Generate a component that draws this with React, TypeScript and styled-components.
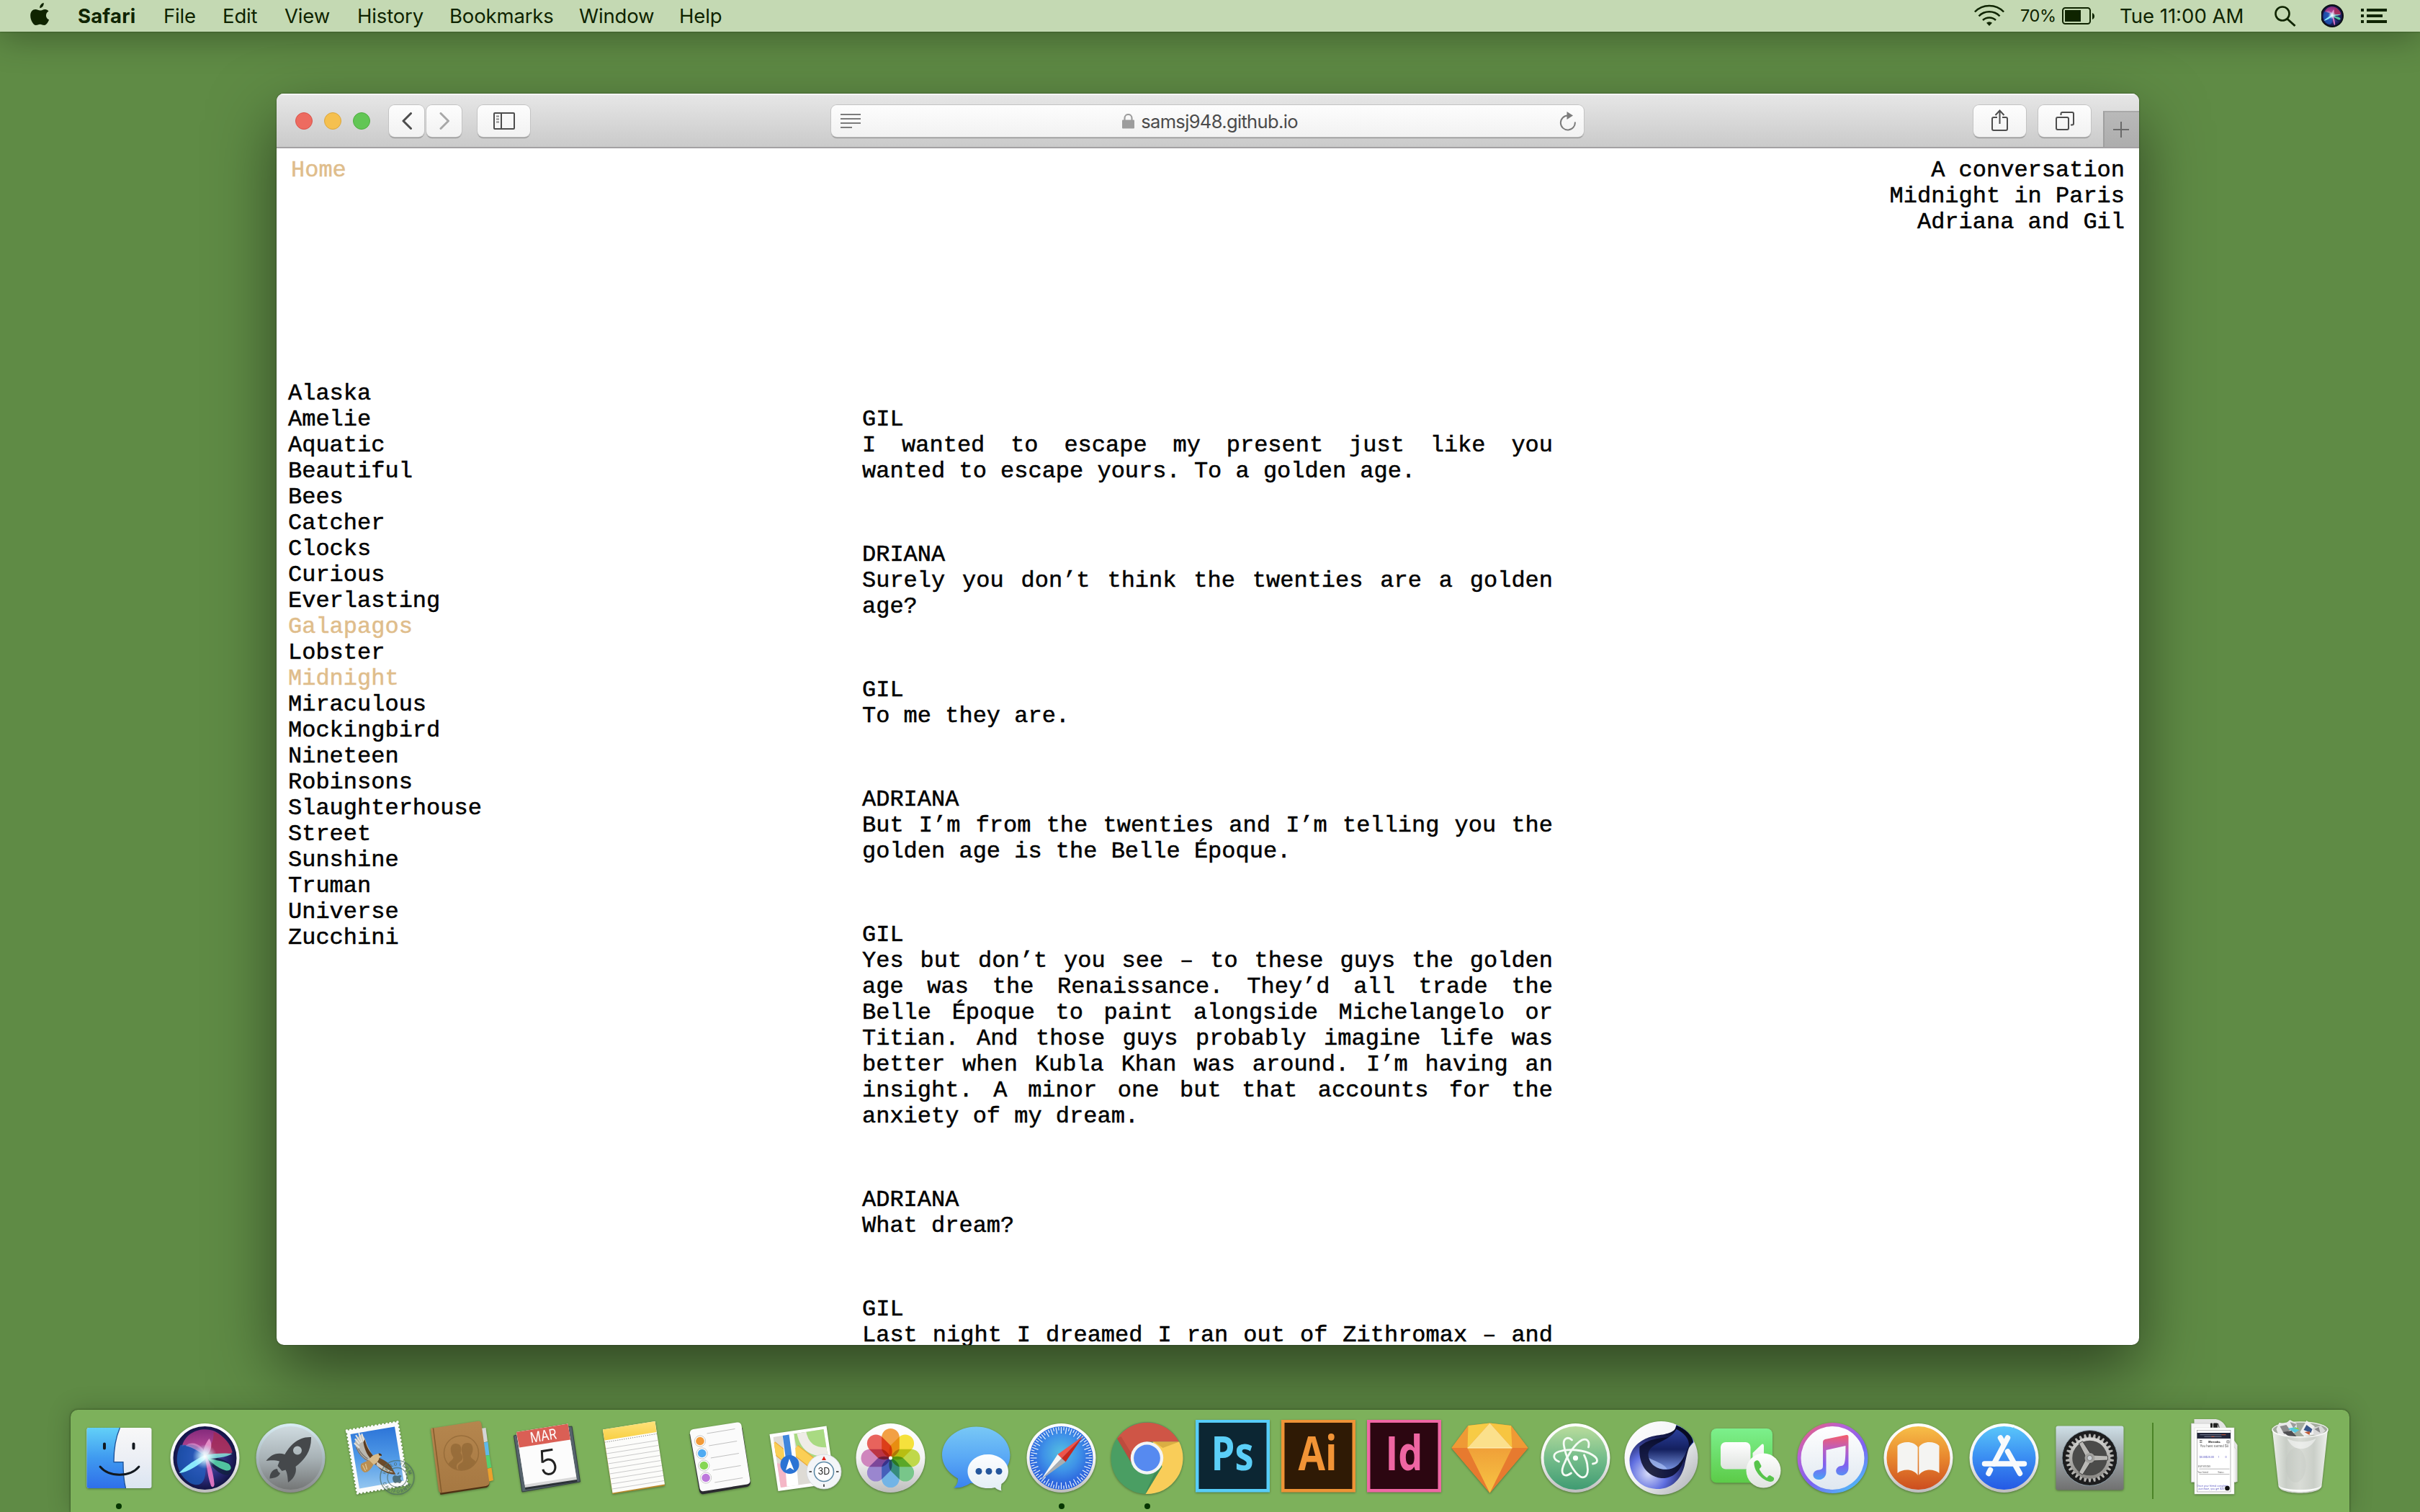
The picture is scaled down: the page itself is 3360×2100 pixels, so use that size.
import React from "react";
import styled, { createGlobalStyle } from "styled-components";

const GlobalStyle = createGlobalStyle`
  html, body { margin: 0; padding: 0; }
  *, *::before, *::after { box-sizing: border-box; }
`;

const ui = `Inter, Roboto, "Liberation Sans", sans-serif`;
const mono = `"Liberation Mono", "DejaVu Sans Mono", monospace`;

const Desktop = styled.div`
  width: 3360px;
  height: 2100px;
  display: flex;
  flex-direction: column;
  overflow: hidden;
  background: #5f8b45;
  font-family: ${ui};
`;

/* ---------- menu bar ---------- */

const MenuBar = styled.header`
  height: 44px;
  flex: none;
  display: flex;
  align-items: center;
  justify-content: space-between;
  padding: 0 46px 0 42px;
  background: #c4d9b3;
  color: #0f2400;
  box-shadow: 0 0 2px rgba(20, 45, 5, 0.7), 0 4px 50px rgba(0, 0, 0, 0.38);
  z-index: 1;
`;

const Menus = styled.nav`
  display: flex;
  align-items: center;
`;

const MenuItem = styled.span<{ $w: number; $bold?: boolean }>`
  width: ${(p) => p.$w}px;
  font-size: 27.5px;
  line-height: 44px;
  letter-spacing: ${(p) => (p.$bold ? 0.2 : -0.15)}px;
  white-space: nowrap;
  font-weight: ${(p) => (p.$bold ? 700 : 400)};
`;

const AppleSlot = styled.span`
  width: 66px;
  height: 44px;
  svg { display: block; }
`;

const Status = styled.div`
  display: flex;
  align-items: center;
  svg { display: block; flex: none; }
`;

const StatusText = styled.span<{ $size: number; $w: number; $track?: number }>`
  width: ${(p) => p.$w}px;
  font-size: ${(p) => p.$size}px;
  line-height: 44px;
  letter-spacing: ${(p) => p.$track ?? 0}px;
  white-space: nowrap;
`;

/* ---------- browser window ---------- */

const BrowserWindow = styled.main`
  width: 2586px;
  height: 1738px;
  flex: none;
  margin: 86px 0 0 384px;
  border-radius: 10px;
  display: flex;
  flex-direction: column;
  overflow: hidden;
  background: #fff;
`;

const WindowShadow = styled.div`
  display: flex;
  ${BrowserWindow} {
    box-shadow: 0 0 2px rgba(0, 0, 0, 0.55), 0 36px 90px rgba(0, 0, 0, 0.5);
  }
`;

const Toolbar = styled.div`
  height: 76px;
  flex: none;
  display: flex;
  align-items: flex-start;
  background: linear-gradient(#e7e7e7, #cacaca);
  border-bottom: 2px solid #a3a1a3;
  box-shadow: inset 0 2px 0 #f5f5f5;
`;

const Lights = styled.div`
  display: flex;
  gap: 16px;
  padding: 26px 0 0 26px;
`;

const Light = styled.i<{ $fill: string; $edge: string }>`
  width: 24px;
  height: 24px;
  border-radius: 50%;
  background: ${(p) => p.$fill};
  border: 1.5px solid ${(p) => p.$edge};
`;

const ToolButton = styled.div<{ $w: number; $ml: number }>`
  width: ${(p) => p.$w}px;
  height: 44px;
  margin: 16px 0 0 ${(p) => p.$ml}px;
  display: flex;
  align-items: center;
  justify-content: center;
  border-radius: 8px;
  background: linear-gradient(#fdfdfd, #f2f2f2);
  box-shadow: 0 0 0 1px #c3c3c3, 0 1.5px 1px #8f8f8f;
  svg { display: block; }
`;

const AddressBar = styled.div`
  width: 1045px;
  height: 44px;
  margin: 16px 0 0 418px;
  padding: 0 11px 0 13px;
  display: flex;
  align-items: center;
  justify-content: space-between;
  border-radius: 8px;
  background: linear-gradient(#fdfdfd, #f2f2f2);
  box-shadow: 0 0 0 1px #c3c3c3, 0 1.5px 1px #8f8f8f;
  svg { display: block; }
`;

const Address = styled.span`
  display: flex;
  align-items: center;
  gap: 9px;
  font-size: 25.5px;
  letter-spacing: -0.65px;
  color: #4b4b4b;
`;

const NewTab = styled.div`
  width: 50px;
  height: 50px;
  margin: 24px 0 0 auto;
  display: flex;
  align-items: center;
  justify-content: center;
  background: linear-gradient(#b9b9b9, #adadad);
  border-left: 2px solid #9f9f9f;
  border-top: 2px solid #a9a9a9;
  svg { margin-left: -3px; }
`;

/* ---------- page ---------- */

const Page = styled.div`
  flex: 1;
  min-height: 0;
  overflow: hidden;
  padding: 13px 20px 0 16px;
  font-family: ${mono};
  font-size: 32px;
  line-height: 36px;
  color: #000;
  -webkit-text-stroke: 0.5px currentColor;
`;

const PageHead = styled.div`
  display: flex;
  justify-content: space-between;
  height: 310px;
  padding-left: 4px;
`;

const Accent = styled.span`
  color: #dfbd8b;
`;

const Title = styled.div`
  text-align: right;
`;

const Columns = styled.div`
  display: flex;
`;

const Index = styled.ul`
  width: 797px;
  margin: 0;
  padding: 0;
  list-style: none;
`;

const IndexItem = styled.li<{ $on?: boolean }>`
  color: ${(p) => (p.$on ? "#dfbd8b" : "#000")};
`;

const Script = styled.div`
  width: 959px;
  padding-top: 36px;
  display: flex;
  flex-direction: column;
  gap: 80px;
`;

const Line = styled.p<{ $fill?: boolean }>`
  margin: 0;
  text-align: justify;
  text-align-last: ${(p) => (p.$fill ? "justify" : "auto")};
`;

/* ---------- dock ---------- */

const DockBar = styled.footer`
  width: 3164px;
  height: 142px;
  flex: none;
  margin: auto auto 0;
  padding-left: 8px;
  display: flex;
  border-radius: 10px 10px 0 0;
  background: #7db15b;
  box-shadow: 0 0 3px rgba(20, 40, 10, 0.75), 0 0 34px rgba(0, 0, 0, 0.2);
  z-index: 1;
`;

const Slot = styled.div`
  width: 118.96px;
  height: 142px;
  flex: none;
  display: flex;
  flex-direction: column;
  svg { display: block; overflow: visible; filter: drop-shadow(0 1.5px 1.5px rgba(0, 0, 0, 0.35)); }
`;

const RunningDot = styled.i`
  width: 8px;
  height: 8px;
  margin: 0 auto;
  border-radius: 50%;
  background: #063600;
`;

const Divider = styled.i`
  width: 2.5px;
  height: 106px;
  margin: 18px 25px 0 27px;
  background: #4b8427;
`;

/* ---------- dock icons, each drawn round its own centre ---------- */

const Grad = ({ id, stops, x2 = 0, y2 = 1 }: { id: string; stops: string[]; x2?: number; y2?: number }) => (
  <linearGradient id={id} x1="0" y1="0" x2={x2} y2={y2}>
    {stops.map((c, i) => (
      <stop key={i} offset={i / (stops.length - 1)} stopColor={c} />
    ))}
  </linearGradient>
);

const Ring = () => (
  <>
    <Grad id="ring" stops={["#ffffff", "#f4f4f4", "#bdbdbd"]} />
    <circle r="48" fill="url(#ring)" />
  </>
);

const Finder = () => (
  <>
    <Grad id="fL" stops={["#62d0f8", "#3f9af0", "#2f6fe9"]} />
    <Grad id="fR" stops={["#f8f8f8", "#eceff5", "#dbe5f2"]} />
    <rect x="-45" y="-42" width="90" height="84" rx="3" fill="url(#fR)" />
    <path d="M-42-42H1C-5-28-7.500-10-7.500 5.700H5.500C5.500 20 6.500 32 9 42H-42a3 3 0 0 1-3-3V-39a3 3 0 0 1 3-3z" fill="url(#fL)" />
    <path d="M1-42C-5-28-7.500-10-7.500 5.700H5.500C5.500 20 6.500 32 9 42" fill="none" stroke="#1b4f94" strokeWidth="1.300" />
    <path d="M-20.500-19.500v6M20-19.500v6" stroke="#12181f" strokeWidth="4" strokeLinecap="round" />
    <path d="M-26.500 12C-14 27 15 27 27.500 12" fill="none" stroke="#12181f" strokeWidth="2.800" strokeLinecap="round" />
  </>
);

const SiriGlyph = ({ s = 1 }: { s?: number }) => (
  <g transform={`scale(${s})`}>
    <radialGradient id="siriBg" cx="0.5" cy="0.5" r="0.55">
      <stop offset="0" stopColor="#6a5bb8" />
      <stop offset="0.6" stopColor="#2a2a78" />
      <stop offset="1" stopColor="#0c0d35" />
    </radialGradient>
    <radialGradient id="siriGlow">
      <stop offset="0" stopColor="#fff" />
      <stop offset="0.35" stopColor="#dffcff" stopOpacity="0.8" />
      <stop offset="1" stopColor="#b9e8ff" stopOpacity="0" />
    </radialGradient>
    <Grad id="siriPink" stops={["#a02f86", "#c2418f", "#d763a8"]} />
    <circle r="44" fill="url(#siriBg)" />
    <path d="M-32-16C-26-38-2-44 14-37 26-31 36-18 38-8 32-3 18-3 0-4-8-18-18-22-32-16z" fill="url(#siriPink)" opacity="0.8" />
    <path d="M12-36C26-32 37-18 38-8 32-2 18-3 0-4 6-14 13-22 12-36z" fill="#a02b54" opacity="0.8" />
    <path d="M-34-18C-44 2-38 26-18 36-2 42 4 28 0-3-10-12-22-20-34-18z" fill="#1c63c4" opacity="0.7" />
    <path d="M0-3C8 14 26 28 34 22 44 10 30 0 0-3z" fill="#10213f" opacity="0.8" />
    <path d="M-27-17C-16-26 0-16 1-3-8-8-14-14-27-17z" fill="#e2a3dc" opacity="0.6" />
    <path d="M6-27C0-19-4-10-1-2 8-6 12-18 6-27z" fill="#f2a0d4" opacity="0.8" />
    <path d="M0-4C-14 2-30 14-36 21-24 20-8 10 2 0z" fill="#8ff1ff" opacity="0.95" />
    <path d="M0-4C14-7 30-7 38-6 30-1 14 1 0 1z" fill="#7fe6dd" opacity="0.85" />
    <path d="M1-2C12 4 24 3 33 8 40 15 34 19 28 17 18 14 8 6 1-2z" fill="#58d5a8" opacity="0.9" />
    <path d="M0-3C3 12 4 26 8 37 9 42 14 41 13 35 12 22 8 8 2-3z" fill="#e477c4" opacity="0.95" />
    <circle cx="0" cy="-2" r="17" fill="url(#siriGlow)" />
  </g>
);

const Siri = () => (
  <>
    <Ring />
    <SiriGlyph />
  </>
);

const Launchpad = () => (
  <>
    <Grad id="lpR" stops={["#d9eef5", "#a9b9bf", "#8a8a8a"]} />
    <Grad id="lpI" stops={["#cfdbe0", "#a8b2b6", "#747676"]} />
    <circle r="48" fill="url(#lpR)" />
    <circle r="44" fill="url(#lpI)" />
    <path
      fillRule="evenodd"
      fill="#45484b"
      d="M28.500-29C10-30-2-16-8-5-20-9-29-3-34 4-29 3-20 3-15.500 4.500L-18 11-12 18-7 16.500C-5 20-4 26-3.500 34 4 29 9 21 7 12 20 2 29-10 28.500-29zM9.500-16.500a6 6 0 1 1 0 12 6 6 0 0 1 0-12z"
    />
    <path d="M-18.500 15C-26 16-29 22-29 28.500-22 28-16 26-14.500 21-17 20-18 18-18.500 15z" fill="#45484b" />
  </>
);

const applePath =
  "M20.400 8.900c-2.600.1-4.800 1.700-6.700 1.700-2.100 0-4.100-1.600-6.400-1.600C3.400 9 .2 12.300.2 17.700c0 6.600 4.200 13.300 7.600 13.300 2 0 3.400-1.300 5.900-1.300 2.400 0 3.500 1.300 5.800 1.300 2.900 0 5.700-4.600 6.500-7.700-5.100-2-5.500-9.100-.5-11.900-1.200-1.700-3.100-2.600-5.100-2.500zM18.700 0c-3.100.4-5.800 3.600-5.400 7.200C16.500 7.100 19.200 3.600 18.700 0z";

const Mail = () => (
  <>
    <Grad id="mSky" stops={["#2c74d8", "#4f99e6", "#94c6f0"]} />
    <polygon points="-41,-38 29.500,-50 43,37 -26.500,49" fill="#fbfbfb" stroke="#fbfbfb" strokeWidth="3.400" strokeDasharray="0.100 5" strokeLinecap="round" />
    <polygon points="-36,-33 25.500,-43.500 38,31.500 -23.500,42.500" fill="url(#mSky)" />
    <path d="M-30-22C-27-8-20 1-11 5L-3-1C-8-8-13-17-15-25-17-30-20-33-23-32z" fill="#b9b6ae" />
    <path d="M-29-26l5 6M-28-31l6 9M-24-34l4 11M-20-33l3 10M-30-20l6 5" stroke="#e4e2dc" strokeWidth="2.200" strokeLinecap="round" />
    <path d="M-28-15C-24-5-18 1-11 4M-25-13C-21-6-17-2-12 1" stroke="#77706a" strokeWidth="1.300" fill="none" />
    <path d="M-16-26C-14-16-9-8-3-2L-7 2C-13-4-17-14-18-22z" fill="#5b3c22" />
    <path d="M0-2C10 2 19 7 22 14L27 23C18 23 8 19 2 12L-5 6z" fill="#6a4a2b" />
    <path d="M1 5C8 11 15 15 24 20 15 20 7 16 0 10z" fill="#cdc6ba" />
    <path d="M-10 2C-6-4 0-6 4-6 7-5 7-2 4 0 3 6-3 10-9 11z" fill="#d8bb8b" />
    <path d="M-10 3L-4 9C-7 15-11 20-16 20-21 18-23 12-21 8-18 6-14 5-10 3z" fill="#b98e52" />
    <path d="M-19 10l4 8M-15 8l2 8" stroke="#e0c594" strokeWidth="1.300" />
    <path d="M3-6.500C6-6.500 8-5 7.500-3L4-3.500z" fill="#4a3019" />
    <g fill="none" stroke="#4c6a63" opacity="0.65">
      <circle cx="29" cy="27" r="23.500" strokeWidth="1.600" />
      <circle cx="29" cy="27" r="13.500" strokeWidth="1.400" />
      <path id="markTop" d="M12.500 27a16.500 16.500 0 0 1 33 0" stroke="none" />
      <path id="markLow" d="M7.500 27a21.500 21.500 0 0 0 43 0" stroke="none" />
    </g>
    <g fill="#4c6a63" opacity="0.75" fontFamily="Inter, sans-serif" fontWeight="700" fontSize="6.200">
      <text>
        <textPath href="#markTop" startOffset="4" textLength="44">HELLO FROM</textPath>
      </text>
      <text>
        <textPath href="#markLow" startOffset="8" textLength="50">CALIFORNIA</textPath>
      </text>
    </g>
    <g transform="translate(22.500 19.500) scale(0.5)" fill="#3e5c62" opacity="0.8">
      <path d={applePath} />
    </g>
  </>
);

const Contacts = () => (
  <>
    <Grad id="ct" stops={["#b5864e", "#a67842"]} />
    <polygon points="26,-41 33,-42 35.500,-23 28,-21" fill="#d4d4d6" />
    <polygon points="28,-21 36,-22.500 38,-4 31,-3" fill="#5fb9ea" />
    <polygon points="31,-3 38,-4 41,13 34,15" fill="#56cf6d" />
    <polygon points="34,15 41,13.500 43.500,31 36,33" fill="#eba12c" />
    <path d="M-42-40L-30 51 34 41Q38 39 38 35z" fill="#4e3013" />
    <path d="M-43.500-41L21-51Q26-52 27-47L38 34Q38 38 33 39L-29.500 48.500Q-32 48-32.500 45z" fill="url(#ct)" />
    <path d="M-40-41.500L-28.500 48" stroke="#835b2c" strokeWidth="1.500" />
    <g opacity="0.65">
      <circle cx="-1" cy="-7" r="24" fill="none" stroke="#8d6433" strokeWidth="1.500" />
      <path d="M-19 9C-18 4-12 3-12-1-17-7-18-20-9-20-1-20 0-13-2-7 3-1 1 3-4 6-9 9-8 14-6 16-12 15-16 13-19 9z" fill="#8d6433" />
      <path d="M-4 17C-8 12-5 9 0 6 3 3 1-2 0-7-2-16 1-21 8-21 16-21 17-10 12-3 12 1 17 2 19 5 14 14 5 18-4 17z" fill="#8d6433" />
    </g>
  </>
);

const Calendar = () => (
  <>
    <polygon points="-47,-31 33.500,-44 45,33 -35.500,47" fill="#56636c" stroke="#343d44" strokeWidth="1" />
    <polygon points="-43,-30 29,-43 41,33 -31,44" fill="#2d3338" />
    <polygon points="-43.500,-36 28,-47.500 40.500,30 -31.500,41" fill="#d9d9d9" />
    <polygon points="-43.500,-36 28,-47.500 39.500,26 -32,37" fill="#fcfcfc" />
    <polygon points="-43.500,-36 28,-47.500 31.500,-25.500 -39.500,-14.500" fill="#da5f55" />
    <g fontFamily="Inter, sans-serif" textAnchor="middle">
      <text transform="translate(-5 -24) rotate(-9)" fontSize="20" fill="#fff" textLength="37" lengthAdjust="spacingAndGlyphs">MAR</text>
      <text transform="translate(3 23.500) rotate(-9)" fontSize="49" fontWeight="300" fill="#222" textLength="27" lengthAdjust="spacingAndGlyphs">5</text>
    </g>
  </>
);

const Notes = () => (
  <>
    <Grad id="nt" stops={["#ffe27a", "#f8cf42"]} />
    <polygon points="-42.500,-38 30,-50 43.500,38.500 -29,50" fill="#b98b2c" />
    <polygon points="-42.500,-39.500 30,-51 43.500,36.500 -29,48.500" fill="#fcfcfa" />
    <polygon points="-42.500,-39.500 30,-51 32,-36 -40,-24.500" fill="url(#nt)" />
    <path d="M-40-21.800L32-33.500" stroke="#777" strokeWidth="1" strokeDasharray="1.200 1.800" />
    {[0, 1, 2, 3, 4, 5, 6, 7, 8].map((i) => (
      <path key={i} d={`M${-38.5 + i * 1.15} ${-13 + i * 7}l72-11.500`} stroke="#c4c4c4" strokeWidth="0.900" />
    ))}
  </>
);

const Reminders = () => (
  <>
    <path d="M-41-33L-27.500 46Q-26 51-21 50L39 40Q44 38 43.500 33L32-42z" fill="#2b2b30" />
    <path d="M-36-40L25-49.500Q30-50 31-45L43 31Q43.500 35.500 39 36.500L-21 46Q-26 47-27 42L-40.500-34Q-41-39-36-40z" fill="#fbfbfb" />
    {["#f29a38", "#4fabf2", "#86d653", "#bd78dc"].map((c, i) => (
      <g key={c}>
        <circle cx={-26.500 + i * 2.700} cy={-23.500 + i * 17} r="7.600" fill="#fff" stroke="#c6c6c6" strokeWidth="1" />
        <circle cx={-26.500 + i * 2.700} cy={-23.500 + i * 17} r="5.800" fill={c} />
      </g>
    ))}
    {[0, 1, 2, 3, 4].map((i) => (
      <path key={i} d={`M${-17 + i * 2.700} ${-34 + i * 17}l39-6.500`} stroke="#c0c0c0" strokeWidth="1" />
    ))}
  </>
);

const Maps = () => (
  <>
    <clipPath id="mapClip">
      <polygon points="-44,-29 26,-40 37,31 -33.500,41" />
    </clipPath>
    <polygon points="-49,-33 30,-44.500 41.500,35 -37,46" fill="#fff" />
    <g clipPath="url(#mapClip)">
      <rect x="-50" y="-50" width="100" height="100" fill="#dedbd5" />
      <polygon points="-18,-44 40,-50 50,20 -10,-8" fill="#a9da82" />
      <path d="M-6-46C-4-14 12-4 44-10" stroke="#efece6" strokeWidth="13" fill="none" />
      <polygon points="-50,5 -24,10 -22,50 -50,50" fill="#f4b6c6" />
      <path d="M-46-17L-26-1M-14-12L14 10" stroke="#eba93d" strokeWidth="15" />
      <path d="M-46-17L-26-1M-14-12L14 10" stroke="#fbcf55" strokeWidth="12.500" />
      <path d="M-24-44L-16 50" stroke="#fff" strokeWidth="16" />
      <path d="M-28-44L-21 8" stroke="#3f86dc" strokeWidth="9" />
    </g>
    <circle cx="-21" cy="9" r="13" fill="#2b73d4" />
    <path d="M-21.500 1L-15 17-20.500 13.500-26.500 17z" fill="#fff" />
    <circle cx="26.500" cy="19" r="24" fill="#f3f5f8" stroke="#d2d6da" strokeWidth="0.800" />
    <circle cx="26.500" cy="19" r="13.500" fill="#fff" stroke="#5d89a6" strokeWidth="1.600" />
    <polygon points="26.500,-2.500 23.500,3 29.500,3" fill="#e2231a" />
    <path d="M6 19h3.500M43.500 19H47M26.500 36.500v3.500" stroke="#222" strokeWidth="1.500" />
    <text x="26.500" y="23.500" fontFamily="Inter, sans-serif" fontSize="12.500" fill="#222" textAnchor="middle">3D</text>
  </>
);

const Photos = () => (
  <>
    <Ring />
    <g style={{ isolation: "isolate" }}>
      {["#f2a045", "#f5e13c", "#c0d84a", "#78c68a", "#72b4e6", "#9a86cf", "#cf86bd", "#e8635c"].map((c, i) => (
        <path
          key={c}
          transform={`rotate(${i * 45})`}
          style={{ mixBlendMode: "multiply" }}
          d="M-12.300-28.700a12.300 12.300 0 0 1 24.600 0V-13C12.300-8 5-1 0 0-5-1-12.300-8-12.300-13z"
          fill={c}
        />
      ))}
    </g>
    <circle r="2.500" fill="#fff" />
  </>
);

const Messages = () => (
  <>
    <Grad id="ms" stops={["#78c8f6", "#5aa9f5", "#3a83ef"]} />
    <Grad id="ms2" stops={["#fdfeff", "#e2edf5"]} />
    <path d="M0-43.500C26-43.500 47-26 47-4S26 35.500 0 35.500Q-4 35.500-8 34.800C-14 39-22 42-31 41.500-27 38-25 34-25.500 28.500-39 21-47.500 9-47.500-4-47.500-26-26-43.500 0-43.500z" fill="url(#ms)" />
    <path d="M16-5C32-5 44.500 5.500 44.500 18.500 44.500 26 41 32 35 36 34.500 40 34 42.500 35 45.500 31 45 28 43 26 41 23 42 19 42 16 42 0 42-12 31.500-12 18.500S0-5 16-5z" fill="url(#ms2)" />
    <circle cx="3.500" cy="18.500" r="4.500" fill="#24569c" />
    <circle cx="17.500" cy="18.500" r="4.500" fill="#24569c" />
    <circle cx="31.500" cy="18.500" r="4.500" fill="#24569c" />
  </>
);

const SafariIcon = () => (
  <>
    <radialGradient id="sf" cy="0.42">
      <stop offset="0" stopColor="#55bfe0" />
      <stop offset="0.55" stopColor="#3f93e8" />
      <stop offset="1" stopColor="#2b63dd" />
    </radialGradient>
    <Ring />
    <circle r="44" fill="url(#sf)" />
    {Array.from({ length: 72 }, (_, i) => (
      <path key={i} d={`M0-43V${i % 2 ? -38.500 : -34}`} transform={`rotate(${i * 5})`} stroke="#e8f2fb" strokeWidth="1.200" />
    ))}
    <polygon points="30,-30 -5,-5 0.500,0.500" fill="#f0544a" />
    <polygon points="30,-30 6,5.500 0.500,0.500" fill="#c8271d" />
    <polygon points="-28,30 -5,-5 0.500,0.500" fill="#f6f6f6" />
    <polygon points="-28,30 6,5.500 0.500,0.500" fill="#a9adb1" />
  </>
);

const Chrome = () => (
  <>
    <circle r="50" fill="#4a9e63" />
    <path d="M-41.500-27A50 50 0 0 1 44.500-22.500H0L-22 5.500z" fill="#cf5546" />
    <path d="M44.700-22.500A50 50 0 0 1-2 50L21 12 8-22.500z" fill="#f9cd59" />
    <path d="M-2 50L21 12 10 22-1 46z" fill="#35794a" opacity="0.5" />
    <path d="M44.700-22.500L10-22.500 22-14z" fill="#c59a35" opacity="0.6" />
    <path d="M-41.500-27L-22 7-19-2-36-30z" fill="#9a3a30" opacity="0.35" />
    <circle r="22.700" fill="#f4f4f4" />
    <circle r="18.400" fill="#568af0" />
  </>
);

const Adobe = ({ text, edge, ink, fill, w, x }: { text: string; edge: string; ink: string; fill: string; w: number; x: number }) => (
  <>
    <rect x="-51.500" y="-53" width="103" height="100.500" fill={edge} />
    <rect x="-47" y="-49" width="94" height="92" fill={fill} />
    <text x={x} y="17" fontFamily="Open Sans, Noto Sans, sans-serif" fontWeight="700" fontSize="66" fill={ink} textLength={w} lengthAdjust="spacingAndGlyphs">
      {text}
    </text>
  </>
);

const SketchIcon = () => (
  <>
    <Grad id="skB" stops={["#f0a038", "#f7c544"]} />
    <polygon points="-30,-45 0,-48.500 29.500,-45 53,-14 0,48.500 -53,-14" fill="#ee8a2e" />
    <polygon points="-30,-45 -53,-14 -31,-14" fill="#ef9a35" />
    <polygon points="29.500,-45 53,-14 31,-14" fill="#ef9a35" />
    <polygon points="-30,-45 0,-48.500 -31,-14" fill="#f7cb45" />
    <polygon points="29.500,-45 0,-48.500 31,-14" fill="#f7c540" />
    <polygon points="0,-48.500 31,-14 -31,-14" fill="#fbe08c" />
    <polygon points="-53,-14 -31,-14 0,48.500" fill="#e77a2f" />
    <polygon points="53,-14 31,-14 0,48.500" fill="#e77a2f" />
    <polygon points="-31,-14 31,-14 0,48.500" fill="url(#skB)" />
    <path d="M-31-14H31" stroke="#fff3c4" strokeWidth="1.200" />
  </>
);

const Atom = () => (
  <>
    <Grad id="at" stops={["#b9dc9c", "#75bd8b", "#3f9b72"]} />
    <Ring />
    <circle r="44" fill="url(#at)" />
    <g fill="none" stroke="#f5fbf5" strokeWidth="2.800" strokeLinecap="round">
      <path d="M-23 5C-32 1-32-6-23-9-10-13 12-12 24-4 32 1 32 7 24 8" />
      <path d="M-5-25C-10-30-18-28-16-17-14-4-6 14 3 23 10 30 17 27 17 16 17 8 15 2 12-4" />
      <path d="M18-15C20-23 16-28 9-25-2-19-12-2-17 11-21 22-16 28-6 21" />
    </g>
    <circle r="3.600" fill="#fff" />
  </>
);

const Cinema = () => (
  <>
    <Grad id="c4" x2={1} stops={["#ffffff", "#f1f2f5", "#a8abb0"]} />
    <radialGradient id="c4b" cx="0.3" cy="0.75" r="0.85">
      <stop offset="0" stopColor="#d7dcf8" />
      <stop offset="0.35" stopColor="#5f6ee0" />
      <stop offset="0.7" stopColor="#151a50" />
      <stop offset="1" stopColor="#070a22" />
    </radialGradient>
    <Grad id="c4c" stops={["#2a3f9c", "#14205f", "#7793e0"]} />
    <circle r="51" fill="url(#c4)" />
    <path d="M21-46C34-41 44-30 45-22L38-14 18-36z" fill="#12309a" />
    <path d="M21-45C40-38 44-26 44-22 38-18 36-6 32 12 26 34 10 44-7 43-30 42-44 24-44 3-43-16-26-28-8-31 6-33 20-35 21-45z" fill="url(#c4b)" />
    <path d="M-30-16C-32 8-20 26 0 28 18 29 28 16 32 0L26-30C10-28-14-30-30-16z" fill="#070b27" opacity="0.85" />
    <path d="M21-40C34-34 40-24 38-16 32-2 26 15 7 16-7 16-18 6-18-5-17-22 12-22 21-40z" fill="url(#c4c)" />
    <path d="M-17 0C-14 12-2 17 8 15 4 8-8 5-17 0z" fill="#a9c0f5" opacity="0.7" />
  </>
);

const Facetime = () => (
  <>
    <Grad id="ft" stops={["#7cf08c", "#5ccb48"]} />
    <Grad id="ft2" stops={["#ffffff", "#dfe3df"]} />
    <rect x="-50" y="-41" width="85.500" height="75.500" rx="8" fill="url(#ft)" />
    <rect x="-36.500" y="-22" width="41.500" height="37.500" rx="7" fill="url(#ft2)" />
    <path d="M8-7L20-18.500Q23-21 23.500-17V10Q23 13 20 11L8 1z" fill="url(#ft2)" />
    <circle cx="23" cy="17.500" r="24" fill="url(#ft2)" />
    <path d="M10 6C12 3 15 2 17 5L20 11C20 14 16 14 18 17 21 22 24 25 27 27 29 28 29 24 32 24L37 27C39 30 36 33 33 33 22 32 9 18 10 6z" fill="#57c44b" />
  </>
);

const ITunes = () => (
  <>
    <Grad id="it" x2={0.7} stops={["#fb5f5a", "#b561d8", "#7b62f2", "#4fb7f8"]} />
    <Grad id="itI" stops={["#ffffff", "#dfe7f0"]} />
    <Grad id="itN" stops={["#f45d6a", "#b85ec4", "#8060f0", "#4aa2f5"]} />
    <circle r="49" fill="url(#it)" />
    <circle r="44" fill="url(#itI)" />
    <path d="M-13.500-22Q-13.500-25-10.500-26L19-32Q22-32.500 22-29V14C22 21 16 25 11 24 2 23 3 12 12 11 16 10 18 10 18-17L-9-11V20C-9 27-15 30.500-20 30-30 29-29 17-19 16.500-15 16-13.500 15-13.500 11z" fill="url(#itN)" />
  </>
);

const IBooks = () => (
  <>
    <Grad id="ib" stops={["#f7bf48", "#e8872e", "#cc4d1f"]} />
    <Ring />
    <circle r="44" fill="url(#ib)" />
    <path d="M-0.800-15C-6-24-22-24-29-17V21C-21 14-6 15-0.800 24zM0.800-15C6-24 22-24 29-17V21C21 14 6 15 0.800 24z" fill="#f4f4f2" />
  </>
);

const AppStore = () => (
  <>
    <Grad id="as" stops={["#59c6fa", "#3a8df2", "#2459e4"]} />
    <Ring />
    <circle r="44" fill="url(#as)" />
    <g stroke="#f8fafc" strokeWidth="7.500" strokeLinecap="round">
      <path d="M-27 8H28" />
      <path d="M5-28L-14 8" />
      <path d="M-19 16.500L-21.500 21.500" />
      <path d="M-5-28L0-19M5-9L22 21.500" />
    </g>
  </>
);

const Preferences = () => (
  <>
    <Grad id="sp" stops={["#cfe0e8", "#9aa1a5", "#707070"]} />
    <Grad id="spg" stops={["#d4d4d2", "#8d8b88"]} />
    <rect x="-47" y="-44.500" width="94" height="89" rx="3" fill="url(#sp)" />
    <circle r="38.500" fill="#1d1d1e" stroke="#8fa0aa" strokeWidth="1" />
    {Array.from({ length: 30 }, (_, i) => (
      <polygon key={i} transform={`rotate(${i * 12})`} points="-2.300,-27 -1.200,-33.500 1.200,-33.500 2.300,-27" fill="#b4b3b0" />
    ))}
    <circle r="26.500" fill="#4b4b4a" stroke="url(#spg)" strokeWidth="4.500" />
    {[90, 210, 330].map((a) => (
      <path key={a} d="M-4-3L-3-25H3L4-3z" transform={`rotate(${a})`} fill="#b9b8b5" stroke="#2b2b2b" strokeWidth="0.700" />
    ))}
    <circle r="7" fill="#a3a29f" />
    <circle r="3.600" fill="#c9cdd1" stroke="#6b6b6b" strokeWidth="0.800" />
  </>
);

const Downloads = () => (
  <>
    <path d="M-28-54H2Q14-52 18-38L32-18V33H-28z" fill="#e4e4e4" />
    <path d="M-32-48H-8L10-40 30-12V33.500H-32z" fill="#f7f7f7" stroke="#c4c4c4" strokeWidth="0.700" />
    <path d="M-5-48h2v7h-2zM-1-48h5v7h-5zM5-48l2 7" fill="#222" stroke="#222" />
    <rect x="-27.500" y="-42" width="55" height="92" fill="#fff" stroke="#d5d5d5" strokeWidth="0.500" />
    <rect x="-24" y="-38.500" width="46.500" height="85.500" fill="#fff" stroke="#8a8a8a" strokeWidth="0.600" />
    <rect x="-24" y="-35" width="46.500" height="8" fill="#22263a" />
    <path d="M-20-32.300h30M-14-29.700h24" stroke="#8e93a8" strokeWidth="0.800" />
    <path d="M10-32.300h6M-4-29.700h4" stroke="#e2603a" strokeWidth="0.900" />
    <path d="M-20.500-24.500h3.500M-20.500-23h3.500M-20.500-21.500h3.500" stroke="#333" strokeWidth="0.600" />
    <rect x="17.500" y="-24" width="3" height="3" fill="none" stroke="#333" strokeWidth="0.600" />
    <g fontFamily="Inter, sans-serif" fontSize="3.400" textAnchor="middle" fill="#555">
      <text x="0" y="-21.500" fontWeight="700" fill="#111">Mercedes</text>
      <text x="0" y="-15.500" fontSize="4.200">You have earned $0</text>
      <text x="-16" y="-0.500" fill="#5a57c0">$0.00</text>
      <text x="-6" y="-0.500" fill="#5a57c0">$20.00</text>
      <text x="6" y="-0.500" fill="#5a57c0">1</text>
      <text x="16" y="-0.500" fill="#5a57c0">0</text>
      <text x="-14" y="13.500" fontSize="2.800">INVITATIONS</text>
      <text x="-16" y="21" fontSize="2.800">Your friend</text>
      <text x="9" y="21" fontSize="2.800">Status</text>
      <text x="-2" y="40" fill="#5a57c0">Once your friend completes</text>
      <text x="-4" y="44" fill="#5a57c0">purchase, you get $20</text>
    </g>
    <path d="M-21 15.200h42M-21 22.500h42" stroke="#8a8a8a" strokeWidth="0.600" />
    <circle cx="18" cy="42" r="3.300" fill="#111" />
  </>
);

const Trash = () => (
  <>
    <Grad id="tr" x2={1} y2={0} stops={["#f2f4f1", "#cdd0cc", "#dfe0dd", "#cfd2ce", "#f4f5f3"]} />
    <ellipse cx="0" cy="-39" rx="38.500" ry="11" fill="#a4ab9f" stroke="#e9ece7" strokeWidth="1.500" />
    <polygon points="-33,-40 -29,-49 -20,-48 -14,-53 -5,-48 -4,-38 -16,-29 -30,-32" fill="#e9e9e9" />
    <polygon points="-28,-44 -19,-46 -14,-39 -22,-33" fill="#8b8b8c" />
    <polygon points="-14,-50 -5,-47 -9,-41" fill="#9c9c9c" />
    <polygon points="-17,-41 -6,-43 -1,-39 -7,-35" fill="#58c8de" />
    <polygon points="-10,-42 -3,-42 -1,-39" fill="#8fd04b" />
    <polygon points="-24,-36 -12,-38 -5,-30 -14,-29" fill="#4f4f52" />
    <polygon points="0,-36 9,-52 20,-44 22,-33 6,-30" fill="#efefef" />
    <polygon points="5,-39 9,-46 17,-40 15,-35" fill="#38568a" />
    <polygon points="6,-36 14,-37 13,-32" fill="#c05a34" />
    <polygon points="18,-42 29,-45 35,-38 28,-31 19,-32" fill="#d9d9d9" />
    <polygon points="20,-40 26,-43 28,-35" fill="#8a8a8c" />
    <path d="M-38.500-39C-34-26 34-26 38.500-39L30 39C28 52-28 52-30 39z" fill="url(#tr)" opacity="0.96" />
    <path d="M-18-27C-8-6 14-10 22-27 8-20-8-22-18-27z" fill="#fff" opacity="0.5" />
    <ellipse cx="-6" cy="10" rx="14" ry="24" fill="#bfc3be" opacity="0.3" />
    <path d="M-30 38C-26 50 26 50 30 38 24 46-24 46-30 38z" fill="#fff" opacity="0.9" />
    <path d="M-38.500-39C-34-26 34-26 38.500-39" fill="none" stroke="#fafbf9" strokeWidth="1.400" />
  </>
);

const dock: { name: string; art: React.ReactNode; running?: boolean }[] = [
  { name: "Finder", art: <Finder />, running: true },
  { name: "Siri", art: <Siri /> },
  { name: "Launchpad", art: <Launchpad /> },
  { name: "Mail", art: <Mail /> },
  { name: "Contacts", art: <Contacts /> },
  { name: "Calendar", art: <Calendar /> },
  { name: "Notes", art: <Notes /> },
  { name: "Reminders", art: <Reminders /> },
  { name: "Maps", art: <Maps /> },
  { name: "Photos", art: <Photos /> },
  { name: "Messages", art: <Messages /> },
  { name: "Safari", art: <SafariIcon />, running: true },
  { name: "Chrome", art: <Chrome />, running: true },
  { name: "Photoshop", art: <Adobe text="Ps" edge="#57cdf9" ink="#5bcff8" fill="#0c2633" x={-30} w={59} /> },
  { name: "Illustrator", art: <Adobe text="Ai" edge="#ee9336" ink="#f29436" fill="#2f1a05" x={-28} w={54} /> },
  { name: "InDesign", art: <Adobe text="Id" edge="#ef67a4" ink="#ee65a2" fill="#2c0611" x={-26} w={52} /> },
  { name: "Sketch", art: <SketchIcon /> },
  { name: "Atom", art: <Atom /> },
  { name: "Cinema", art: <Cinema /> },
  { name: "FaceTime", art: <Facetime /> },
  { name: "iTunes", art: <ITunes /> },
  { name: "iBooks", art: <IBooks /> },
  { name: "App Store", art: <AppStore /> },
  { name: "Preferences", art: <Preferences /> },
];

const DockItem = ({ art, running }: { art: React.ReactNode; running?: boolean }) => (
  <Slot>
    <svg width="118.96" height="130" viewBox="-59.48 -67 118.96 130">{art}</svg>
    {running && <RunningDot />}
  </Slot>
);

const titles =
  "Alaska Amelie Aquatic Beautiful Bees Catcher Clocks Curious Everlasting Galapagos Lobster Midnight Miraculous Mockingbird Nineteen Robinsons Slaughterhouse Street Sunshine Truman Universe Zucchini".split(" ");

const script: { who: string; says: string; cut?: boolean }[] = [
  { who: "GIL", says: "I wanted to escape my present just like you wanted to escape yours. To a golden age." },
  { who: "DRIANA", says: "Surely you don’t think the twenties are a golden age?" },
  { who: "GIL", says: "To me they are." },
  { who: "ADRIANA", says: "But I’m from the twenties and I’m telling you the golden age is the Belle Époque." },
  {
    who: "GIL",
    says: "Yes but don’t you see – to these guys the golden age was the Renaissance. They’d all trade the Belle Époque to paint alongside Michelangelo or Titian. And those guys probably imagine life was better when Kubla Khan was around. I’m having an insight. A minor one but that accounts for the anxiety of my dream.",
  },
  { who: "ADRIANA", says: "What dream?" },
  { who: "GIL", says: "Last night I dreamed I ran out of Zithromax – and", cut: true },
];

const menus: [string, number][] = [
  ["File", 82],
  ["Edit", 86],
  ["View", 101],
  ["History", 128],
  ["Bookmarks", 180],
  ["Window", 139],
  ["Help", 80],
];

export default function App() {
  return (
    <Desktop>
      <GlobalStyle />
      <MenuBar>
        <Menus>
          <AppleSlot>
            <svg width="27" height="44" viewBox="0 0 27 44">
              <path transform="translate(0 4)" d={applePath} fill="#0f2400" />
            </svg>
          </AppleSlot>
          <MenuItem $w={119} $bold>Safari</MenuItem>
          {menus.map(([m, w]) => (
            <MenuItem key={m} $w={w}>{m}</MenuItem>
          ))}
        </Menus>
        <Status>
          <svg width="64" height="44" viewBox="0 0 64 44" fill="none" stroke="#0f2400" strokeWidth="2.500">
            <path d="M0.900 16.500a28 28 0 0 1 40.200 0M6.500 22.300a20.500 20.500 0 0 1 29 0M12 28a13 13 0 0 1 18 0" />
            <path d="M21 36l-4-4.200a6 6 0 0 1 8 0z" fill="#0f2400" stroke="none" />
          </svg>
          <StatusText $size={23.5} $w={58} $track={-0.4}>70%</StatusText>
          <svg width="80" height="44" viewBox="0 0 80 44">
            <rect x="1" y="11" width="38" height="22" rx="3.500" fill="none" stroke="#0f2400" strokeWidth="2" />
            <rect x="4" y="14" width="22" height="16" fill="#0f2400" />
            <path d="M42 18c4 1 4 8 0 9z" fill="#0f2400" />
          </svg>
          <StatusText $size={27.5} $w={215} $track={0}>Tue 11:00 AM</StatusText>
          <svg width="65" height="44" viewBox="0 0 65 44" fill="none" stroke="#0f2400" strokeWidth="2.600">
            <circle cx="11" cy="19" r="9.500" />
            <path d="M17.500 26l11 10" strokeWidth="3" />
          </svg>
          <svg width="55" height="44" viewBox="0 0 55 44">
            <g transform="translate(15 22)">
              <circle r="16" fill="#0c0f14" />
              <SiriGlyph s={0.32} />
            </g>
          </svg>
          <svg width="36" height="44" viewBox="0 0 36 44" fill="#0f2400">
            <path d="M0 12h4v4H0zM0 20h4v4H0zM0 28h4v4H0zM8 12h28v4H8zM8 20h22v4H8zM8 28h28v4H8z" />
          </svg>
        </Status>
      </MenuBar>

      <WindowShadow>
        <BrowserWindow>
          <Toolbar>
            <Lights>
              <Light $fill="#ed6b60" $edge="#d9534a" />
              <Light $fill="#f5c04f" $edge="#dba63c" />
              <Light $fill="#62c655" $edge="#4fac40" />
            </Lights>
            <ToolButton $w={49} $ml={26}>
              <svg width="16" height="24" viewBox="0 0 16 24" fill="none" stroke="#4d4d4d" strokeWidth="3" strokeLinecap="round" strokeLinejoin="round">
                <path d="M13.500 1.500L3 12l10.500 10.500" />
              </svg>
            </ToolButton>
            <ToolButton $w={49} $ml={3}>
              <svg width="16" height="24" viewBox="0 0 16 24" fill="none" stroke="#a8a8a8" strokeWidth="3" strokeLinecap="round" strokeLinejoin="round">
                <path d="M3 1.500L13.500 12 3 22.500" />
              </svg>
            </ToolButton>
            <ToolButton $w={73} $ml={22}>
              <svg width="30" height="24" viewBox="0 0 30 24" fill="none" stroke="#4d4d4d" strokeWidth="2">
                <rect x="1" y="1" width="28" height="22" rx="1" />
                <path d="M11 1v22" />
                <path d="M4 5.500h4M4 9.500h4M4 13.500h4" stroke="#8a8a8a" />
              </svg>
            </ToolButton>
            <AddressBar>
              <svg width="28" height="22" viewBox="0 0 28 22" stroke="#7c7c7c" strokeWidth="2">
                <path d="M0 2h28M0 8h28M0 14h28M0 20h16" />
              </svg>
              <Address>
                <svg width="17" height="21" viewBox="0 0 17 21">
                  <rect y="8.500" width="17" height="12" rx="1" fill="#9d9d9d" />
                  <path d="M3.500 9V6a5 5 0 0 1 10 0v3" fill="none" stroke="#9d9d9d" strokeWidth="2.200" />
                </svg>
                samsj948.github.io
              </Address>
              <svg width="23" height="28" viewBox="0 0 23 28">
                <path d="M12 6.500a10 10 0 1 0 9.800 9" fill="none" stroke="#7c7c7c" strokeWidth="2" />
                <path d="M10.500 1v11l8.500-5.500z" fill="#7c7c7c" />
              </svg>
            </AddressBar>
            <ToolButton $w={73} $ml={541}>
              <svg width="24" height="32" viewBox="0 0 24 32" fill="none" stroke="#4d4d4d" strokeWidth="2">
                <path d="M8 11H3a2 2 0 0 0-2 2v14a2 2 0 0 0 2 2h17a2 2 0 0 0 2-2V13a2 2 0 0 0-2-2h-5M11.500 20V1.500M5.500 8l6-6.500 6 6.500" />
              </svg>
            </ToolButton>
            <ToolButton $w={73} $ml={17}>
              <svg width="26" height="26" viewBox="0 0 26 26" fill="none" stroke="#4d4d4d" strokeWidth="2">
                <rect x="1" y="8" width="17" height="17" rx="2" />
                <path d="M7.500 5V3a2 2 0 0 1 2-2H23a2 2 0 0 1 2 2v13.500a2 2 0 0 1-2 2h-2" />
              </svg>
            </ToolButton>
            <NewTab>
              <svg width="22" height="22" viewBox="0 0 22 22" stroke="#6a6a6a" strokeWidth="2">
                <path d="M11 0v22M0 11h22" />
              </svg>
            </NewTab>
          </Toolbar>
          <Page>
            <PageHead>
              <Accent>Home</Accent>
              <Title>
                A conversation
                <br />
                Midnight in Paris
                <br />
                Adriana and Gil
              </Title>
            </PageHead>
            <Columns>
              <Index>
                {titles.map((t) => (
                  <IndexItem key={t} $on={t === "Galapagos" || t === "Midnight"}>{t}</IndexItem>
                ))}
              </Index>
              <Script>
                {script.map((s, i) => (
                  <div key={i}>
                    <Line>{s.who}</Line>
                    <Line $fill={s.cut}>{s.says}</Line>
                  </div>
                ))}
              </Script>
            </Columns>
          </Page>
        </BrowserWindow>
      </WindowShadow>

      <DockBar>
        {dock.map((d) => (
          <DockItem key={d.name} art={d.art} running={d.running} />
        ))}
        <Divider />
        <DockItem art={<Downloads />} />
        <DockItem art={<Trash />} />
      </DockBar>
    </Desktop>
  );
}
